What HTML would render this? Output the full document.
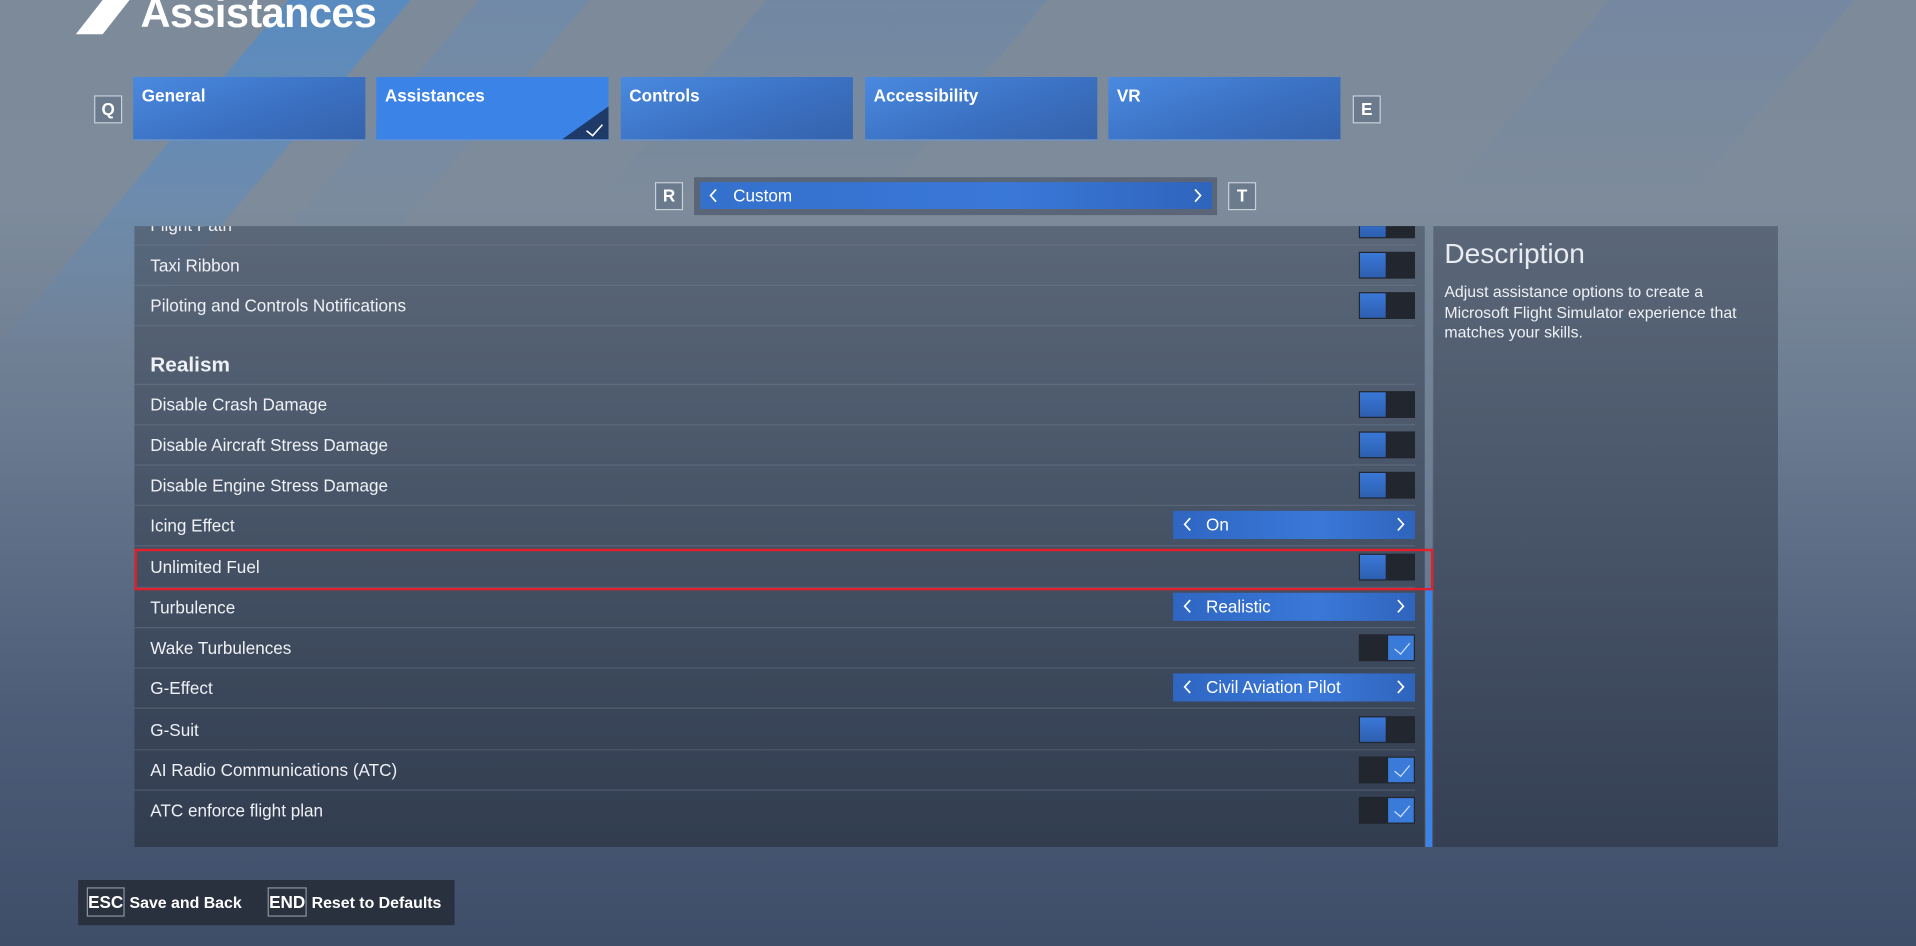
<!DOCTYPE html>
<html><head><meta charset="utf-8"><style>
html,body{margin:0;padding:0;width:1916px;height:946px;overflow:hidden;background:#4a5a72}
#w{position:absolute;left:0;top:0;width:1568px;height:774px;transform:scale(1.22194,1.2222);transform-origin:0 0;overflow:hidden;
background:linear-gradient(180deg,#7c8a9a 0%,#7d8b9b 22%,#6a7a90 45%,#4d5d78 75%,#3e4d68 100%);font-family:"Liberation Sans",sans-serif;color:#fff}
.abs{position:absolute}
.stripe{position:absolute;transform:skewX(-40deg);}
.tab{position:absolute;top:63px;width:190px;height:52px;background:linear-gradient(160deg,#4a8ae0,#3a6fc0 60%,#3563ad);font-weight:bold;font-size:14px;box-sizing:border-box;padding:7px 7px;border-bottom:1px solid #6a93cf}
.key{position:absolute;border:1px solid #c8d0da;font-weight:bold;font-size:14px;text-align:center;box-sizing:border-box;background:rgba(90,105,125,.5)}
.row{position:absolute;left:110px;width:1048px;height:33px;border-bottom:1px solid rgba(120,135,155,.35);box-sizing:border-box}
.row span{position:absolute;left:13px;top:8px;font-size:14px;color:#eef1f5}
.tg{position:absolute;left:1002px;top:5px;width:46px;height:22px;background:#22262f}
.tg.off::before{content:"";position:absolute;left:1px;top:1px;width:21px;height:20px;background:linear-gradient(180deg,#3a78d8,#2d5fb0)}
.tg.on::before{content:"";position:absolute;right:1px;top:1px;width:21px;height:20px;background:#3a7ad8}
.tg.on::after{content:"";position:absolute;right:7px;top:4px;width:6px;height:11px;border:solid #cfe0f7;border-width:0 1.5px 1.5px 0;transform:rotate(40deg)}
.sel{position:absolute;left:850px;top:4px;width:198px;height:23px;background:linear-gradient(90deg,#2f66c2,#3a78d8 60%,#2f64bc);font-size:14px}
.sel svg{position:absolute;top:5px}
.sel b{position:absolute;left:27px;top:3px;font-weight:normal;color:#fff}
</style></head><body><div id="w">
<div class="stripe" style="left:110px;top:0;width:100px;height:300px;background:linear-gradient(180deg,rgba(60,140,225,.55),rgba(60,140,225,0));"></div>
<div class="stripe" style="left:300px;top:0;width:90px;height:220px;background:linear-gradient(180deg,rgba(80,140,210,.25),rgba(80,140,210,0));"></div>
<div class="stripe" style="left:560px;top:0;width:230px;height:160px;background:linear-gradient(180deg,rgba(70,130,200,.2),rgba(70,130,200,0));"></div>
<div class="stripe" style="left:1250px;top:0;width:200px;height:160px;background:linear-gradient(180deg,rgba(90,130,190,.2),rgba(90,130,190,0));"></div>
<svg class="abs" style="left:62px;top:0" width="46" height="30"><polygon points="22,0 44,0 22,28 0,28" fill="#fff"/></svg>
<div class="abs" style="left:115px;top:-8px;font-size:34px;font-weight:bold;letter-spacing:-0.5px">Assistances</div>
<div class="key" style="left:77px;top:78px;width:23px;height:23px;line-height:21px">Q</div>
<div class="tab" style="left:109px">General</div>
<div class="tab" style="left:308px;background:#3b83e6">Assistances
<svg class="abs" style="right:0;bottom:0" width="38" height="27"><polygon points="38,0 38,27 0,27" fill="#1e3a68"/><polyline points="20,20 25,24 33,15" fill="none" stroke="#fff" stroke-width="1.3"/></svg></div>
<div class="tab" style="left:508px">Controls</div>
<div class="tab" style="left:708px">Accessibility</div>
<div class="tab" style="left:907px">VR</div>
<div class="key" style="left:1107px;top:78px;width:23px;height:23px;line-height:21px">E</div>
<div class="key" style="left:536px;top:149px;width:23px;height:23px;line-height:21px">R</div>
<div class="abs" style="left:568px;top:145px;width:428px;height:31px;background:#5a6678"></div>
<div class="abs" style="left:573px;top:149px;width:419px;height:22px;background:linear-gradient(90deg,#3470cc,#3a78d8 60%,#2f64bc);font-size:14px">
<svg class="abs" style="left:7px;top:5px" width="8" height="12"><polyline points="6,1 1.5,6 6,11" fill="none" stroke="#fff" stroke-width="1.4"/></svg>
<span class="abs" style="left:27px;top:3px">Custom</span>
<svg class="abs" style="right:8px;top:5px" width="8" height="12"><polyline points="2,1 6.5,6 2,11" fill="none" stroke="#fff" stroke-width="1.4"/></svg></div>
<div class="key" style="left:1005px;top:149px;width:23px;height:23px;line-height:21px">T</div>
<div class="abs" style="left:110px;top:185px;width:1056px;height:508px;background:linear-gradient(180deg,rgba(80,92,110,.75),rgba(45,55,72,.8))"></div>
<div class="abs" style="left:1166px;top:185px;width:6px;height:508px;background:rgba(120,135,155,.5)"></div>
<div class="abs" style="left:1167px;top:480px;width:5px;height:213px;background:#3a84e8"></div>
<div class="abs" style="left:1173px;top:185px;width:282px;height:508px;background:linear-gradient(180deg,rgba(85,97,115,.85),rgba(50,60,80,.85))"></div>
<div class="abs" style="left:1182px;top:194px;font-size:23px;color:#e8ecf0">Description</div>
<div class="abs" style="left:1182px;top:231px;width:262px;font-size:13px;line-height:16.5px;color:#eef1f5">Adjust assistance options to create a<br>Microsoft Flight Simulator experience that matches your skills.</div>
<div style="position:absolute;left:0;top:185px;width:1200px;height:508px;overflow:hidden">
<div class="row" style="top:-17px"><span>Flight Path</span><div class="tg off"></div></div>
</div>
<div class="row" style="top:201px"><span>Taxi Ribbon</span><div class="tg off"></div></div>
<div class="row" style="top:234px"><span>Piloting and Controls Notifications</span><div class="tg off"></div></div>
<div class="row" style="top:267px;height:48px"><span style="top:22px;font-size:17px;font-weight:bold">Realism</span></div>
<div class="row" style="top:315px"><span>Disable Crash Damage</span><div class="tg off"></div></div>
<div class="row" style="top:348px"><span>Disable Aircraft Stress Damage</span><div class="tg off"></div></div>
<div class="row" style="top:381px"><span>Disable Engine Stress Damage</span><div class="tg off"></div></div>
<div class="row" style="top:414px"><span>Icing Effect</span><div class="sel"><svg style="left:8px" width="8" height="12"><polyline points="6,1 1.5,6 6,11" fill="none" stroke="#fff" stroke-width="1.4"/></svg><b>On</b><svg style="right:8px" width="8" height="12"><polyline points="2,1 6.5,6 2,11" fill="none" stroke="#fff" stroke-width="1.4"/></svg></div></div>
<div class="row" style="top:448px"><span>Unlimited Fuel</span><div class="tg off"></div></div>
<div class="row" style="top:481px"><span>Turbulence</span><div class="sel"><svg style="left:8px" width="8" height="12"><polyline points="6,1 1.5,6 6,11" fill="none" stroke="#fff" stroke-width="1.4"/></svg><b>Realistic</b><svg style="right:8px" width="8" height="12"><polyline points="2,1 6.5,6 2,11" fill="none" stroke="#fff" stroke-width="1.4"/></svg></div></div>
<div class="row" style="top:514px"><span>Wake Turbulences</span><div class="tg on"></div></div>
<div class="row" style="top:547px"><span>G-Effect</span><div class="sel"><svg style="left:8px" width="8" height="12"><polyline points="6,1 1.5,6 6,11" fill="none" stroke="#fff" stroke-width="1.4"/></svg><b>Civil Aviation Pilot</b><svg style="right:8px" width="8" height="12"><polyline points="2,1 6.5,6 2,11" fill="none" stroke="#fff" stroke-width="1.4"/></svg></div></div>
<div class="row" style="top:581px"><span>G-Suit</span><div class="tg off"></div></div>
<div class="row" style="top:614px"><span>AI Radio Communications (ATC)</span><div class="tg on"></div></div>
<div class="row" style="top:647px;border:none"><span>ATC enforce flight plan</span><div class="tg on"></div></div>
<div class="abs" style="left:110px;top:449px;width:1059px;height:30px;border:2px solid #e0202a"></div>
<div class="abs" style="left:64px;top:720px;width:308px;height:37px;background:#29303e"></div>
<div class="key" style="left:71px;top:726px;width:31px;height:24px;line-height:22px;background:none;border-color:#8a93a0">ESC</div>
<div class="abs" style="left:106px;top:731px;font-size:13px;font-weight:bold">Save and Back</div>
<div class="key" style="left:219px;top:726px;width:32px;height:24px;line-height:22px;background:none;border-color:#8a93a0">END</div>
<div class="abs" style="left:255px;top:731px;font-size:13px;font-weight:bold">Reset to Defaults</div>
</div></body></html>
